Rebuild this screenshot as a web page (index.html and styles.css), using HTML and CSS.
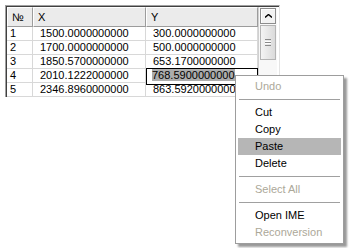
FILE: index.html
```html
<!DOCTYPE html>
<html lang="en">
<head>
  <meta charset="UTF-8">
  <title>Grid</title>
  <link rel="stylesheet" href="styles.css">
</head>
<body>
  <div class="grid">
    <div class="inner">
      <div class="cells">
        <div class="hd">№</div>
        <div class="hd">X</div>
        <div class="hd">Y</div>

        <div class="c num">1</div><div class="c">1500.0000000000</div><div class="c">300.0000000000</div>
        <div class="c num">2</div><div class="c">1700.0000000000</div><div class="c">500.0000000000</div>
        <div class="c num">3</div><div class="c">1850.5700000000</div><div class="c">653.1700000000</div>
        <div class="c num">4</div><div class="c">2010.1222000000</div><div class="c edit"><span class="sel">768.5900000000</span></div>
        <div class="c num">5</div><div class="c">2346.8960000000</div><div class="c">863.5920000000</div>
      </div>
      <div class="vscroll">
        <div class="up">
          <svg width="7" height="4" viewBox="0 0 7 4"><path d="M0 3.5 L3.5 0.5 L7 3.5" fill="none" stroke="#000" stroke-width="1.4"/></svg>
        </div>
        <div class="thumb">
          <div class="grip"></div>
        </div>
      </div>
    </div>
  </div>

  <div class="menu">
    <div class="item off">Undo</div>
    <div class="sep"></div>
    <div class="item">Cut</div>
    <div class="item">Copy</div>
    <div class="item hot">Paste</div>
    <div class="item">Delete</div>
    <div class="sep"></div>
    <div class="item off">Select All</div>
    <div class="sep"></div>
    <div class="item">Open IME</div>
    <div class="item off">Reconversion</div>
  </div>
</body>
</html>
```

FILE: styles.css
```css
body {
  margin: 0;
  background: #fff;
  font-family: "Liberation Sans", Arial, sans-serif;
  font-size: 11px;
  color: #000;
}
.grid {
  margin: 5px 0 0 5px;
  width: 273px;
  border-left: 1px solid #a0a0a0;
  border-top: 1px solid #a0a0a0;
  border-right: 1px solid #e4e4e4;
}
.inner {
  display: flex;
  border-left: 1px solid #404040;
  border-top: 1px solid #404040;
}
.cells {
  display: grid;
  grid-template-columns: 26px 113px 112px;
  grid-auto-rows: 14px;
  grid-template-rows: 20px;
}
.hd {
  background: #ebebeb;
  border-top: 1px solid #fff;
  border-left: 1px solid #fff;
  border-right: 1px solid #9c9c9c;
  border-bottom: 1px solid #9c9c9c;
  line-height: 18px;
  padding-left: 4px;
}
.c {
  border-right: 1px solid #d8d8d8;
  border-bottom: 1px solid #d8d8d8;
  line-height: 13px;
  padding-left: 7px;
  white-space: nowrap;
}
.c.num { padding-left: 3px; }
.c.edit {
  border: 1px solid #000;
  margin-top: -1px;
  height: 15px;
  line-height: 13px;
  padding-left: 5px;
}
.sel { background: #acacac; }
.vscroll {
  width: 19px;
  border-left: 1px solid #d0d0d0;
  background: #f8f8f8;
  padding: 1px 1px 0 1px;
  box-sizing: border-box;
  height: 90px;
}
.up {
  height: 16px;
  background: #f2f2f2;
  border: 1px solid #8c8c8c;
  box-shadow: inset 1px 1px #fff;
  box-sizing: border-box;
  display: flex;
  align-items: center;
  justify-content: center;
}
.thumb {
  margin-top: 1px;
  height: 35px;
  background: linear-gradient(to right, #f4f4f4, #dadada);
  border: 1px solid #b4b4b4;
  box-sizing: border-box;
  display: flex;
  align-items: center;
  justify-content: center;
}
.grip {
  width: 6px;
  height: 5px;
  border-top: 1px solid #8a8a8a;
  border-bottom: 1px solid #8a8a8a;
  background: linear-gradient(#fff 0 1px, #8a8a8a 1px 2px, #fff 2px);
  background-size: 100% 3px;
  background-position: 0 1px;
  background-repeat: no-repeat;
}
.menu {
  position: absolute;
  left: 235px;
  top: 75px;
  width: 109px;
  box-sizing: border-box;
  padding: 2px;
  background: #fff;
  border: 1px solid #9d9d9d;
  box-shadow: 3px 3px 2px rgba(0, 0, 0, 0.4);
}
.item {
  height: 17px;
  line-height: 17px;
  padding-left: 17px;
  white-space: nowrap;
}
.item.off { color: #aca899; }
.item.hot { background: #b6b6b6; }
.sep {
  height: 9px;
  margin: 0 1px;
  background: linear-gradient(#a0a0a0, #a0a0a0) 0 4px / 100% 1px no-repeat;
}
```
